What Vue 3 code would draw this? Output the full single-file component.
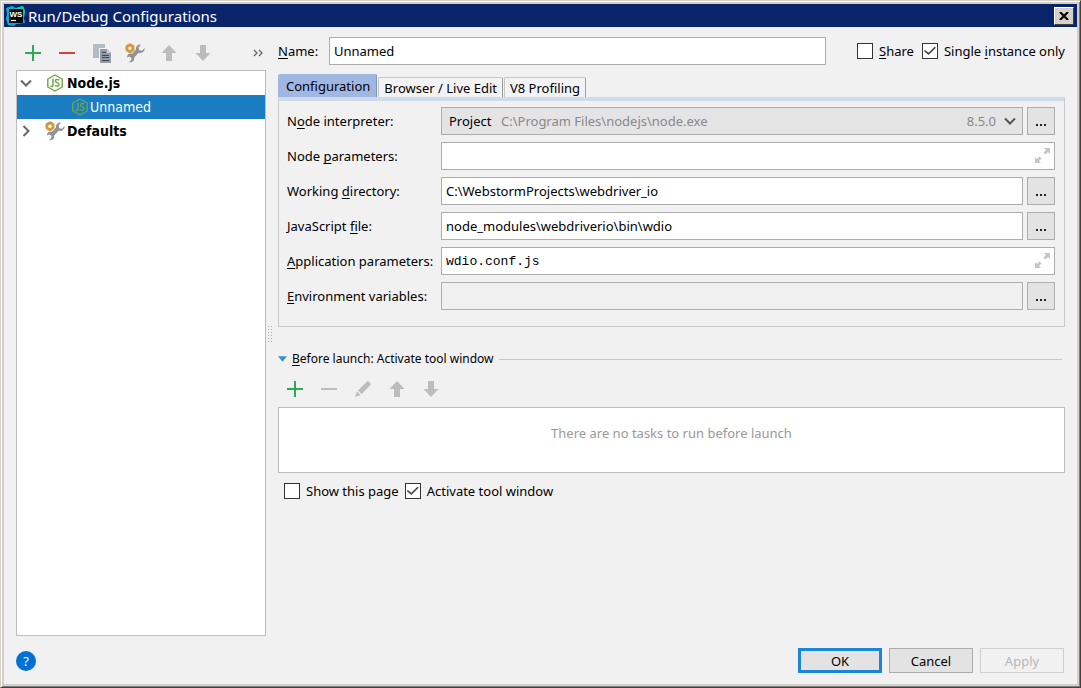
<script setup>
import { ref } from 'vue'

const name = ref('Unnamed')
const share = ref(false)
const single = ref(true)
const showPage = ref(false)
const activate = ref(true)
const interpreter = ref('project')
const fields = ref([
  { id: 'params', label: ['Node ', 'p', 'arameters:'], value: '', kind: 'expand' },
  { id: 'dir', label: ['Working ', 'd', 'irectory:'], value: 'C:\\WebstormProjects\\webdriver_io', kind: 'browse' },
  { id: 'file', label: ['JavaScript ', 'f', 'ile:'], value: 'node_modules\\webdriverio\\bin\\wdio', kind: 'browse' },
  { id: 'app', label: ['', 'A', 'pplication parameters:'], value: 'wdio.conf.js', kind: 'expand', mono: true },
  { id: 'env', label: ['', 'E', 'nvironment variables:'], value: '', kind: 'browse', readonly: true }
])
</script>

<template>
  <svg class="defs" aria-hidden="true">
    <symbol id="plus" viewBox="0 0 16 16"><path d="M8 0V16M0 8H16" stroke="#2bab54" stroke-width="2" fill="none" /></symbol>
    <symbol id="minus" viewBox="0 0 16 16"><path d="M0 8H16" stroke="currentColor" stroke-width="2" fill="none" /></symbol>
    <symbol id="up" viewBox="0 0 16 16"><path d="M8 0L15.5 8H11V16H5V8H.5Z" fill="#bcbcbc" /></symbol>
    <symbol id="down" viewBox="0 0 16 16"><path d="M8 16L15.5 8H11V0H5V8H.5Z" fill="#bcbcbc" /></symbol>
    <symbol id="tools" viewBox="0 0 20 20">
      <path d="M19.6 5L17 7.8L14.2 7.2L13.6 4.4L16 1.6C13 .8 10.4 3.4 11 6.6L7 10.8C4.4 10 1.8 11.8 2 14.6L4.4 13.4L6.6 15L6 17.6L3.8 19C6.8 20.2 9.8 17.6 9.2 14.4L13.6 9.8C17 10.6 20.2 8 19.6 5Z" fill="#929292" />
      <path d="M5 .6L9 2.9V7.5L5 9.8L1 7.5V2.9Z" fill="none" stroke="#d8953c" stroke-width="1" />
      <circle cx="5" cy="5.2" r="3" fill="none" stroke="#d8953c" stroke-width="2.4" />
    </symbol>
    <symbol id="node" viewBox="0 0 18 18">
      <path d="M9 1L16.2 5V13L9 17L1.8 13V5Z" fill="none" stroke="#6da544" stroke-width="1.4" stroke-linejoin="round" />
      <path d="M7 5V11.2C7 12.7 5.7 13 4.3 12M13.1 6.1C11.8 5 9.4 5.3 9.4 7C9.4 9.1 13 8.1 13 10.4C13 12.4 10.3 12.6 9 11.3" fill="none" stroke="#6da544" stroke-width="1.5" />
    </symbol>
    <symbol id="expand" viewBox="0 0 16 16">
      <path d="M10 1H16V7L14 5L11.5 7.5L9.5 5.5L12 3ZM1 16V10L3 12L5.5 9.5L7.5 11.5L5 14L7 16Z" fill="#c4c4c4" />
    </symbol>
  </svg>

  <div class="window">
    <header class="titlebar">
      <svg class="logo" viewBox="0 0 20 20">
        <path d="M0 2L6 0L10 2L17 0L19 5L18 12L19 17L10 18L8 20L2 19L0 13L1 8Z" fill="#15a9d0" />
        <path d="M10 2L17 0L19 5L18 11L12 7Z" fill="#19c5ae" />
        <rect x="3" y="3" width="14" height="14" fill="#080808" />
        <path d="M5 14.5H10" stroke="#fff" stroke-width="1.2" />
        <text x="3.4" y="10.8">WS</text>
      </svg>
      <h1>Run/Debug Configurations</h1>
      <button class="close" aria-label="Close"><svg viewBox="0 0 10 8"><path d="M1 0L9 8M9 0L1 8" stroke="#000" stroke-width="2.1" /></svg></button>
    </header>

    <main class="body">
      <aside class="side">
        <div class="toolbar">
          <button aria-label="Add"><svg><use href="#plus" /></svg></button>
          <button class="red" aria-label="Remove"><svg><use href="#minus" /></svg></button>
          <button aria-label="Copy">
            <svg class="big" viewBox="0 0 20 20">
              <path d="M2 1H14V5H8V15H2Z" fill="#b0bcc8" />
              <path d="M9 6H16L20 10V20H9Z" fill="#939da8" /><path d="M16 6V10H20Z" fill="#c8d0d8" />
              <path d="M11 9.5H15M11 12.5H18M11 14.5H18M11 17.5H18" stroke="#3f464d" stroke-width="1" />
            </svg>
          </button>
          <button aria-label="Edit defaults"><svg class="big"><use href="#tools" /></svg></button>
          <button aria-label="Move up"><svg><use href="#up" /></svg></button>
          <button aria-label="Move down"><svg><use href="#down" /></svg></button>
          <button class="more" aria-label="More"><svg viewBox="0 0 10 8"><path d="M1 1L4 4L1 7M6 1L9 4L6 7" fill="none" stroke="#666" stroke-width="1.3" /></svg></button>
        </div>
        <ul class="tree">
          <li class="group"><svg class="arrow" viewBox="0 0 12 12"><path d="M1 3.5L6 8.5L11 3.5" fill="none" stroke="#666" stroke-width="2" /></svg><svg class="icon"><use href="#node" /></svg><b>Node.js</b></li>
          <li class="selected"><svg class="icon"><use href="#node" /></svg><span>Unnamed</span></li>
          <li class="group"><svg class="arrow" viewBox="0 0 12 12"><path d="M3.5 1L8.5 6L3.5 11" fill="none" stroke="#666" stroke-width="2" /></svg><svg class="icon tool"><use href="#tools" /></svg><b>Defaults</b></li>
        </ul>
      </aside>

      <div class="splitter"><i></i></div>

      <section class="editor">
        <div class="name-row">
          <label for="name"><u>N</u>ame:</label>
          <input id="name" v-model="name" class="text">
          <div class="checks">
            <label><input v-model="share" type="checkbox"><span><u>S</u>hare</span></label>
            <label><input v-model="single" type="checkbox"><span>Single <u>i</u>nstance only</span></label>
          </div>
        </div>

        <nav class="tabs">
          <button class="active">Configuration</button>
          <button>Browser / Live Edit</button>
          <button>V8 Profiling</button>
        </nav>
        <div class="panel">
          <div class="row">
            <label for="interp">N<u>o</u>de interpreter:</label>
            <div class="combo">
              <select id="interp" v-model="interpreter"><option value="project">Project</option></select>
              <div class="detail"><span>C:\Program Files\nodejs\node.exe</span><span class="version">8.5.0</span><svg viewBox="0 0 12 12"><path d="M1 3.5L6 8.5L11 3.5" fill="none" stroke="#555" stroke-width="2" /></svg></div>
            </div>
            <button class="browse" aria-label="Browse"><i></i></button>
          </div>
          <div v-for="f in fields" :key="f.id" class="row">
            <label :for="f.id">{{ f.label[0] }}<u>{{ f.label[1] }}</u>{{ f.label[2] }}</label>
            <div class="field">
              <input :id="f.id" v-model="f.value" class="text" :class="{ mono: f.mono }" :readonly="f.readonly">
              <button v-if="f.kind === 'expand'" class="expand" aria-label="Expand"><svg><use href="#expand" /></svg></button>
            </div>
            <button v-if="f.kind === 'browse'" class="browse" aria-label="Browse"><i></i></button>
          </div>
        </div>

        <h2 class="divider">
          <svg viewBox="0 0 10 6"><path d="M0 0H10L5 6Z" fill="#3e8fc6" /></svg>
          <span><u>B</u>efore launch: Activate tool window</span>
        </h2>
        <div class="toolbar tasks-bar">
          <button aria-label="Add task"><svg><use href="#plus" /></svg></button>
          <button class="off" aria-label="Remove task"><svg><use href="#minus" /></svg></button>
          <button aria-label="Edit task"><svg viewBox="0 0 16 16"><path d="M0 16L2 10.5L5.5 14ZM3 9.5L11.5 1C13.5-.8 17 2.5 15 4.6L6.5 13Z" fill="#bcbcbc" /></svg></button>
          <button aria-label="Task up"><svg><use href="#up" /></svg></button>
          <button aria-label="Task down"><svg><use href="#down" /></svg></button>
        </div>
        <div class="tasks">There are no tasks to run before launch</div>
        <div class="checks options">
          <label><input v-model="showPage" type="checkbox"><span>Show this page</span></label>
          <label><input v-model="activate" type="checkbox"><span>Activate tool window</span></label>
        </div>
      </section>
    </main>

    <footer class="footer">
      <button class="help" aria-label="Help">?</button>
      <button class="action primary">OK</button>
      <button class="action">Cancel</button>
      <button class="action" disabled>Apply</button>
    </footer>
  </div>
</template>

<style>
body { background: #f1f1f1; }
</style>

<style scoped>
* { box-sizing: border-box; }
.defs { position: absolute; width: 0; height: 0; }
.window {
  min-height: 100vh;
  display: flex;
  flex-direction: column;
  background: #f1f1f1;
  border: 1px solid;
  border-color: #d4d0c8 #404040 #404040 #d4d0c8;
  box-shadow: inset 1px 1px #fff, inset -1px -1px #808080, inset 3px 3px #d4d0c8, inset -3px -3px #d4d0c8;
  padding: 3px;
  font: 13px/20px "Noto Sans", sans-serif;
  color: #000;
}
button, input, select { font: inherit; color: inherit; margin: 0; padding: 0; }
button { border: 0; background: none; }
u { text-underline-offset: 2px; text-decoration-thickness: 1px; text-decoration-skip-ink: none; }
h1, h2 { margin: 0; font: inherit; }
svg { display: block; }

.titlebar { display: flex; align-items: center; height: 23px; padding: 0 3px 0 2px; background: #0a246a; color: #fff; }
.logo { width: 20px; height: 20px; margin-right: 2px; }
.logo text { font: bold 8px "Liberation Sans", sans-serif; fill: #fff; }
.titlebar h1 { flex: 1; font-size: 15px; }
.close { width: 20px; height: 18px; display: grid; place-items: center; background: #d4d0c8; border: 1px solid; border-color: #fff #404040 #404040 #fff; }
.close svg { width: 10px; height: 8px; }

.body { flex: 1; display: flex; padding: 10px 12px 0; }
.side { width: 250px; display: flex; flex-direction: column; }
.toolbar { display: flex; }
.side .toolbar { height: 33px; padding-bottom: 2px; }
.toolbar button { width: 34px; height: 100%; display: grid; place-items: center; }
.toolbar svg { width: 16px; height: 16px; }
.toolbar .big { width: 20px; height: 20px; }
.toolbar .red { color: #d0443a; }
.toolbar .off { color: #bcbcbc; }
.toolbar .more { margin-left: auto; width: 16px; }
.toolbar .more svg { width: 10px; height: 8px; }
.tree { flex: 1; margin: 0; padding: 0; list-style: none; background: #fff; border: 1px solid #bdbdbd; font: 14px/20px "DejaVu Sans Condensed", sans-serif; }
.tree li { display: flex; align-items: center; height: 24px; padding-left: 3px; }
.tree li.selected { padding-left: 54px; background: #1a7dc4; color: #fff; }
.arrow { width: 12px; height: 12px; margin-right: 14px; }
.icon { width: 18px; height: 18px; margin-right: 3px; }
.selected .icon { margin-right: 1px; }
.tree .tool { width: 20px; height: 20px; margin: 0 2px 0 -1px; }

.splitter { width: 12px; display: flex; align-items: flex-start; padding: 288px 0 0 1px; }
.splitter i { width: 5px; height: 18px; background: radial-gradient(circle, #aaa 1px, transparent 1px) 0 0 / 3px 3px; }

.editor { flex: 1; min-width: 0; display: flex; flex-direction: column; }
.name-row { display: flex; align-items: center; }
.name-row > label { width: 51px; }
.text { display: block; width: 100%; height: 28px; padding: 0 4px; background: #fff; border: 1px solid #adadad; border-radius: 0; outline: 0; }
.name-row .text { flex: 1; width: auto; min-width: 0; margin-right: 31px; }
.checks { display: flex; gap: 8px; }
.checks label { display: flex; align-items: center; gap: 6px; white-space: nowrap; }
input[type="checkbox"] { appearance: none; width: 16px; height: 16px; background: #fff; border: 1px solid #333; display: grid; }
input[type="checkbox"]:checked::before { content: ""; margin: 2px 1px; background: #444; clip-path: polygon(0 50%, 10% 40%, 38% 68%, 90% 8%, 100% 18%, 38% 90%); }

.tabs { display: flex; align-items: flex-end; gap: 1px; height: 23px; margin-top: 9px; }
.tabs button { height: 20px; padding: 0 5px; background: #f3f3f3; border: 1px solid #c8c8c8; border-right-color: #9a9a9a; border-bottom: 0; border-radius: 2px 2px 0 0; white-space: nowrap; }
.tabs .active { height: 23px; padding: 0 6px 0 8px; background: #a0b7e2; border: 0; border-right: 1px solid #8295bd; }
.panel { display: flex; flex-direction: column; gap: 7px; border: 1px solid #c8c8c8; border-top: 4px solid #cddbea; padding: 6px 9px 16px 8px; }
.row { display: flex; gap: 4px; align-items: center; }
.row > label { flex: 0 0 150px; white-space: nowrap; }
.field, .combo { position: relative; flex: 1; min-width: 0; }
.text.mono { font: 13px "Liberation Mono", monospace; }
.text:read-only { background: #f0f0f0; }
.combo select { display: block; width: 100%; height: 28px; appearance: none; padding: 0 7px; background: #e4e4e4; border: 1px solid #adadad; border-radius: 0; }
.detail { position: absolute; inset: 0 7px 0 60px; display: flex; align-items: center; pointer-events: none; color: #888; }
.detail .version { margin-left: auto; margin-right: 8px; }
.detail svg { width: 12px; height: 12px; }
.browse { width: 28px; height: 28px; background: #e3e3e3; border: 1px solid #adadad; display: grid; place-items: center; }
.browse i { width: 10px; height: 2px; margin-top: 7px; background: repeating-linear-gradient(90deg, #222 0 2px, transparent 2px 4px); }
.expand { position: absolute; right: 5px; top: 5px; }
.expand svg { width: 16px; height: 16px; }

.divider { display: flex; align-items: center; gap: 5px; margin: 22px 3px 0 0; font-size: 12px; }
.divider svg { width: 9px; height: 6px; flex: none; }
.divider::after { content: ""; flex: 1; height: 1px; background: #c8c8c8; }
.tasks-bar { height: 38px; padding-top: 2px; }
.tasks { height: 66px; padding-top: 15px; background: #fff; border: 1px solid #bdbdbd; text-align: center; color: #999; }
.options { gap: 6px; margin: 8px 6px; }

.footer { display: flex; align-items: center; gap: 7px; padding: 12px 13px 11px 12px; }
.help { width: 20px; height: 20px; margin-right: auto; border-radius: 50%; background: #0070d2; color: #fff; line-height: 20px; }
.action { width: 84px; height: 25px; background: #e3e3e3; border: 1px solid #adadad; }
.primary { border: 3px solid #1a86d9; }
.action:disabled { background: #f1f1f1; border-color: #d0d0d0; color: #b8b8b8; }
</style>
